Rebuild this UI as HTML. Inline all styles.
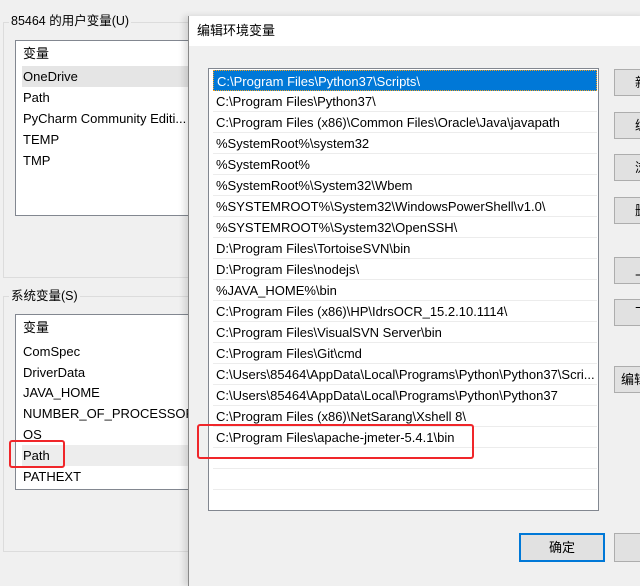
<!DOCTYPE html>
<html><head><meta charset="utf-8"><style>
*{margin:0;padding:0;box-sizing:border-box}
body{width:640px;height:575px;background:#f0f0f0;position:relative;overflow:hidden;font-family:"Liberation Sans","Noto Sans CJK SC",sans-serif;font-size:13px;color:#000}
.a{position:absolute}
.grp{position:absolute;border:1px solid #dcdcdc}
.lbl{position:absolute;background:#f0f0f0;padding:0 2px;line-height:16px;font-size:12.5px}
.lb{position:absolute;background:#fff;border:1px solid #828790}
.r{position:absolute;left:7px;height:21px;line-height:22px;white-space:nowrap}
.p{position:absolute;left:4px;right:1px;height:21px;line-height:22px;padding-left:3px;border-bottom:1px solid #ececec;white-space:nowrap}
.btn{position:absolute;left:614px;width:40px;height:27px;background:#e1e1e1;border:1px solid #adadad;line-height:25px;padding-left:20px}
.red{position:absolute;border:2px solid #f0262a;border-radius:3px}
</style></head><body>
<div class="grp" style="left:3px;top:22px;width:700px;height:256px"></div>
<div class="lbl" style="left:9px;top:13px">85464 的用户变量(U)</div>
<div class="lb" style="left:15px;top:40px;width:200px;height:176px">
<div class="r" style="top:2px">变量</div>
<div class="a" style="left:6px;top:25px;width:200px;height:21px;background:#e5e5e5"></div>
<div class="r" style="top:25px">OneDrive</div>
<div class="r" style="top:46px">Path</div>
<div class="r" style="top:67px">PyCharm Community Editi...</div>
<div class="r" style="top:88px">TEMP</div>
<div class="r" style="top:109px">TMP</div>
</div>
<div class="grp" style="left:3px;top:296px;width:700px;height:256px"></div>
<div class="lbl" style="left:9px;top:288px">系统变量(S)</div>
<div class="lb" style="left:15px;top:314px;width:200px;height:176px">
<div class="r" style="top:2px">变量</div>
<div class="r" style="top:26px">ComSpec</div>
<div class="r" style="top:47px">DriverData</div>
<div class="r" style="top:67px">JAVA_HOME</div>
<div class="r" style="top:88px">NUMBER_OF_PROCESSORS</div>
<div class="r" style="top:109px">OS</div>
<div class="a" style="left:6px;top:130px;width:200px;height:21px;background:#ededed"></div>
<div class="r" style="top:130px">Path</div>
<div class="r" style="top:151px">PATHEXT</div>
</div>
<div class="red" style="left:9px;top:440px;width:56px;height:28px"></div>
<div class="a" style="left:188px;top:16px;width:460px;height:570px;background:#f0f0f0;border-left:1px solid #888;box-shadow:-4px 0 6px rgba(0,0,0,.12)"></div>
<div class="a" style="left:189px;top:16px;width:460px;height:30px;background:#fff"></div>
<div class="a" style="left:197px;top:23px;line-height:16px">编辑环境变量</div>
<div class="lb" style="left:208px;top:68px;width:391px;height:443px">
<div class="p" style="top:1px;background:#0078d7;color:#fff;border:1px dotted #f0a020">C:\Program Files\Python37\Scripts\</div>
<div class="p" style="top:22px">C:\Program Files\Python37\</div>
<div class="p" style="top:43px">C:\Program Files (x86)\Common Files\Oracle\Java\javapath</div>
<div class="p" style="top:64px">%SystemRoot%\system32</div>
<div class="p" style="top:85px">%SystemRoot%</div>
<div class="p" style="top:106px">%SystemRoot%\System32\Wbem</div>
<div class="p" style="top:127px">%SYSTEMROOT%\System32\WindowsPowerShell\v1.0\</div>
<div class="p" style="top:148px">%SYSTEMROOT%\System32\OpenSSH\</div>
<div class="p" style="top:169px">D:\Program Files\TortoiseSVN\bin</div>
<div class="p" style="top:190px">D:\Program Files\nodejs\</div>
<div class="p" style="top:211px">%JAVA_HOME%\bin</div>
<div class="p" style="top:232px">C:\Program Files (x86)\HP\IdrsOCR_15.2.10.1114\</div>
<div class="p" style="top:253px">C:\Program Files\VisualSVN Server\bin</div>
<div class="p" style="top:274px">C:\Program Files\Git\cmd</div>
<div class="p" style="top:295px">C:\Users\85464\AppData\Local\Programs\Python\Python37\Scri...</div>
<div class="p" style="top:316px">C:\Users\85464\AppData\Local\Programs\Python\Python37</div>
<div class="p" style="top:337px">C:\Program Files (x86)\NetSarang\Xshell 8\</div>
<div class="p" style="top:358px">C:\Program Files\apache-jmeter-5.4.1\bin</div>
<div class="p" style="top:379px"></div>
<div class="p" style="top:400px"></div>
</div>
<div class="red" style="left:197px;top:424px;width:277px;height:35px"></div>
<div class="btn" style="top:69px">新</div>
<div class="btn" style="top:112px">编</div>
<div class="btn" style="top:154px">浏</div>
<div class="btn" style="top:197px">删</div>
<div class="btn" style="top:257px">上</div>
<div class="btn" style="top:299px">下</div>
<div class="btn" style="top:366px;padding-left:6px">编辑</div>
<div class="a" style="left:519px;top:533px;width:86px;height:29px;background:#e1e1e1;border:2px solid #0078d7;text-align:center;line-height:25px">确定</div>
<div class="a" style="left:614px;top:533px;width:40px;height:29px;background:#e1e1e1;border:1px solid #adadad"></div>
</body></html>
